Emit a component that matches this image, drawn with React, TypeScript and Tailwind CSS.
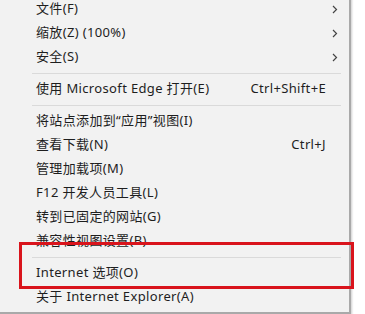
import React from "react";

type Item =
  | { type: "sep" }
  | { type: "item"; label: string; shortcut?: string; arrow?: boolean };

const items: Item[] = [
  { type: "item", label: "文件(F)", arrow: true },
  { type: "item", label: "缩放(Z) (100%)", arrow: true },
  { type: "item", label: "安全(S)", arrow: true },
  { type: "sep" },
  { type: "item", label: "使用 Microsoft Edge 打开(E)", shortcut: "Ctrl+Shift+E" },
  { type: "sep" },
  { type: "item", label: "将站点添加到“应用”视图(I)" },
  { type: "item", label: "查看下载(N)", shortcut: "Ctrl+J" },
  { type: "item", label: "管理加载项(M)" },
  { type: "item", label: "F12 开发人员工具(L)" },
  { type: "item", label: "转到已固定的网站(G)" },
  { type: "item", label: "兼容性视图设置(B)" },
  { type: "sep" },
  { type: "item", label: "Internet 选项(O)" },
  { type: "item", label: "关于 Internet Explorer(A)" },
];

function Chevron() {
  return (
    <svg width="6" height="9" viewBox="0 0 6 9" className="block">
      <path d="M1 1 L4.5 4.5 L1 8" fill="none" stroke="#444" strokeWidth="1.2" />
    </svg>
  );
}

export default function App() {
  return (
    <div
      className="relative w-[365px] h-[314px] bg-white overflow-hidden"
      style={{ fontFamily: '"Noto Sans", "Noto Sans CJK SC", sans-serif' }}
    >
      <div className="w-[351px] -mt-[3px] pb-[3px] bg-[#f2f2f2] border-r-2 border-b-2 border-[#a9a9a9] shadow-[1px_1px_2px_rgba(0,0,0,0.2)]">
        {items.map((it, i) =>
          it.type === "sep" ? (
            <div key={i} className="h-2 flex items-center pl-8 pr-2">
              <div className="h-px w-full bg-[#dadada]" />
            </div>
          ) : (
            <div
              key={i}
              className="h-6 flex items-center pl-9 pr-[11px] text-[13px] tracking-[0.35px] text-[#1e1e1e]"
            >
              <span className="flex-1 whitespace-nowrap">{it.label}</span>
              {it.shortcut && (
                <span className="whitespace-nowrap mr-[12px]">{it.shortcut}</span>
              )}
              {it.arrow && <Chevron />}
            </div>
          )
        )}
      </div>
      <div className="absolute left-[19px] top-[242px] w-[335px] h-[47px] border-[3px] border-[#d9141c]" />
    </div>
  );
}
